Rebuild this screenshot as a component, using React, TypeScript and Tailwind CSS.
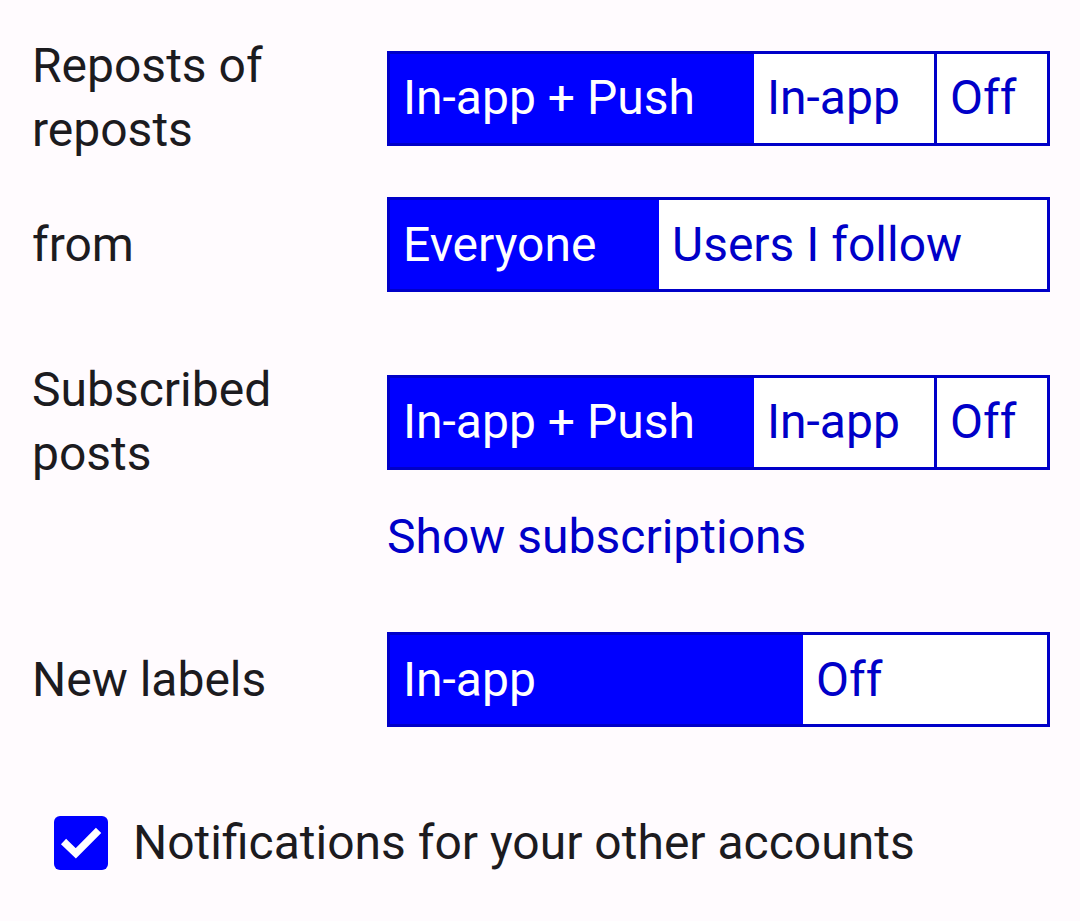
import React from "react";

const font = { fontFamily: "Roboto, 'Noto Sans', sans-serif" };

function Seg({ label, selected, className }: { label: string; selected?: boolean; className: string }) {
  return (
    <div
      className={
        "flex h-full items-center pl-[13px] text-[48px] leading-none whitespace-nowrap " +
        (selected ? "bg-[#0000ff] text-white " : "text-[#0000c8] ") +
        className
      }
    >
      {label}
    </div>
  );
}

function ThreeWay() {
  return (
    <div className="flex h-[95px] w-[663px] border-[3px] border-[#0000c8] bg-white">
      <Seg label="In-app + Push" selected className="w-[364px]" />
      <Seg label="In-app" className="w-[183px] border-r-[3px] border-[#0000c8]" />
      <Seg label="Off" className="flex-1" />
    </div>
  );
}

export default function App() {
  return (
    <div style={font} className="w-[1080px] h-[921px] bg-[#fffbfe] pl-[32px] pt-[34px] text-[#1c1b1f] overflow-hidden">
      {/* Row 1 */}
      <div className="flex items-center">
        <div className="w-[355px] text-[48px] leading-[64px]">
          Reposts of
          <br />
          reposts
        </div>
        <ThreeWay />
      </div>

      {/* Row 2 */}
      <div className="flex items-center mt-[35px]">
        <div className="w-[355px] text-[48px] leading-[64px]">from</div>
        <div className="flex h-[95px] w-[663px] border-[3px] border-[#0000c8] bg-white">
          <Seg label="Everyone" selected className="w-[269px]" />
          <Seg label="Users I follow" className="flex-1" />
        </div>
      </div>

      {/* Row 3 */}
      <div className="flex items-center mt-[66px]">
        <div className="w-[355px] text-[48px] leading-[64px]">
          Subscribed
          <br />
          posts
        </div>
        <ThreeWay />
      </div>

      <div className="mt-[19px] ml-[355px] text-[48px] leading-[64px] text-[#0000c8]">Show subscriptions</div>

      {/* Row 4 */}
      <div className="flex items-center mt-[63px]">
        <div className="w-[355px] text-[48px] leading-[64px]">New labels</div>
        <div className="flex h-[95px] w-[663px] border-[3px] border-[#0000c8] bg-white">
          <Seg label="In-app" selected className="w-[413px]" />
          <Seg label="Off" className="flex-1" />
        </div>
      </div>

      {/* Checkbox */}
      <div className="flex items-center mt-[84px] ml-[22px] gap-[25px]">
        <div className="flex h-[54px] w-[54px] items-center justify-center rounded-[6px] bg-[#0000ff]">
          <svg width="46" height="46" viewBox="0 0 24 24" fill="none">
            <path d="M4.3 12.6 L9.3 17.4 L19.8 6.8" stroke="white" strokeWidth="3.9" strokeLinecap="square" strokeLinejoin="miter" />
          </svg>
        </div>
        <div className="text-[48px] leading-[64px] whitespace-nowrap">Notifications for your other accounts</div>
      </div>
    </div>
  );
}
